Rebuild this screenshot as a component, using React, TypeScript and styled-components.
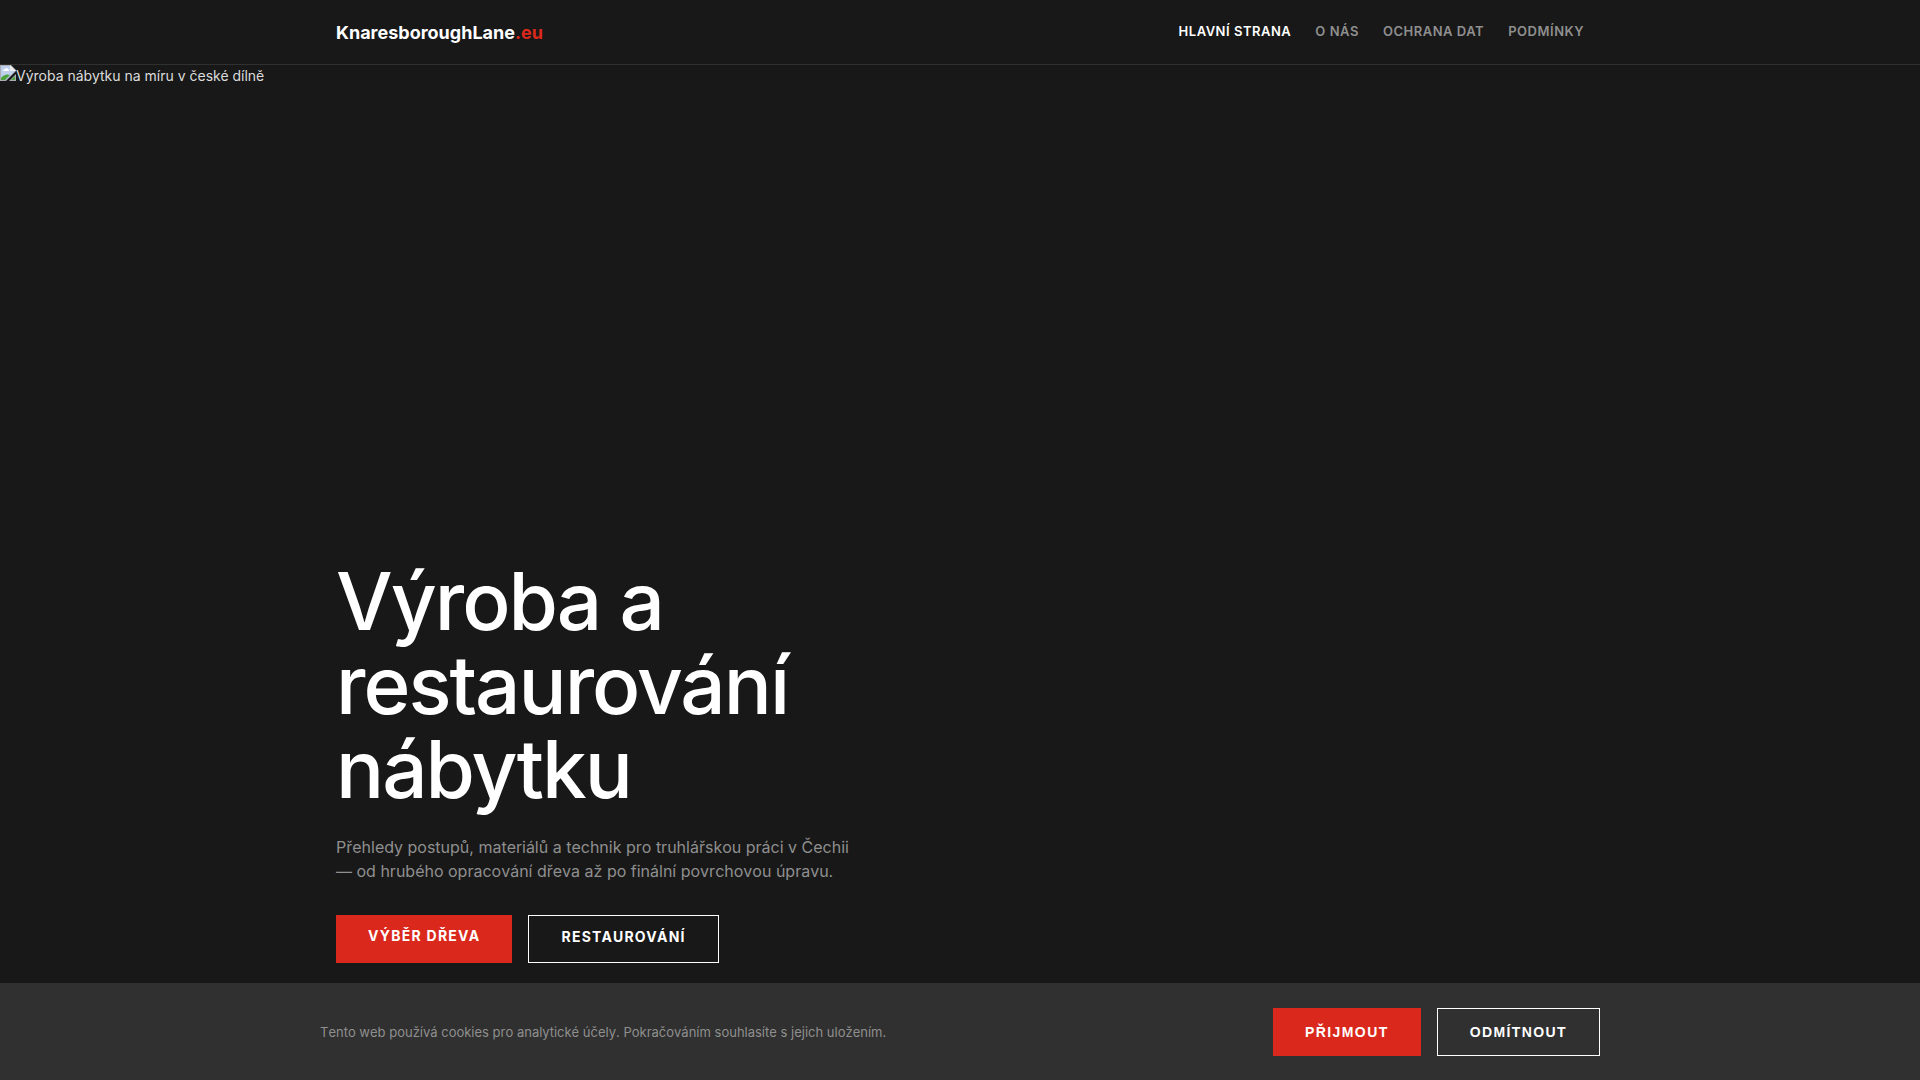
import React from "react";
import styled, { createGlobalStyle, css } from "styled-components";

const GlobalStyle = createGlobalStyle`
  *, *::before, *::after { box-sizing: border-box; }
  body {
    margin: 0;
    background: #181818;
    color: #ffffff;
    font-family: Inter, "Liberation Sans", sans-serif;
    font-size: 14px;
    line-height: 21px;
  }
  h1, p, ul { margin: 0; padding: 0; }
`;

const Page = styled.div`
  min-height: 100vh;
  display: flex;
  flex-direction: column;
`;

const Header = styled.header`
  border-bottom: 1px solid #303030;
`;

const HeaderInner = styled.div`
  max-width: 1280px;
  min-height: 64px;
  margin: 0 auto;
  padding: 0 16px;
  display: flex;
  align-items: center;
  justify-content: space-between;
`;

const Logo = styled.a`
  color: #ffffff;
  font-size: 18px;
  font-weight: 700;
  line-height: 27px;
  text-decoration: none;
`;

const LogoSuffix = styled.span`
  color: #da291c;
`;

const NavList = styled.ul`
  display: flex;
  gap: 24px;
  list-style: none;
`;

const NavLink = styled.a<{ $active?: boolean }>`
  display: block;
  border-bottom: 2px solid transparent;
  color: ${({ $active }) => ($active ? "#ffffff" : "#8f8f8f")};
  font-size: 13px;
  font-weight: 600;
  line-height: 20px;
  letter-spacing: 0.04em;
  text-transform: uppercase;
  text-decoration: none;
`;

const Hero = styled.main`
  flex: 1;
  display: flex;
  flex-direction: column;
  justify-content: space-between;
  padding-bottom: 20px;
`;

const MissingPhoto = styled.div`
  display: flex;
  color: #dcdcdc;
  svg { flex: none; }
`;

const HeroContent = styled.div`
  width: 100%;
  max-width: 1280px;
  margin: 0 auto;
  padding: 0 16px;
`;

const Title = styled.h1`
  max-width: 640px;
  margin-bottom: 24px;
  font-size: 80px;
  font-weight: 500;
  line-height: 84px;
  letter-spacing: -2px;
`;

const Lead = styled.p`
  max-width: 520px;
  margin-bottom: 32px;
  color: #8f8f8f;
  font-size: 16px;
  line-height: 24px;
  font-kerning: none;
`;

const Actions = styled.div`
  display: flex;
  gap: 16px;
`;

const buttonLook = css<{ $outline?: boolean }>`
  min-height: 48px;
  padding: 12px 32px;
  border: ${({ $outline }) => ($outline ? "1px solid #ffffff" : "0")};
  border-radius: 0;
  background: ${({ $outline }) => ($outline ? "transparent" : "#da291c")};
  color: #ffffff;
  font-size: 14px;
  font-weight: 700;
  text-transform: uppercase;
  text-decoration: none;
  cursor: pointer;
`;

const ActionLink = styled.a<{ $outline?: boolean }>`
  ${buttonLook}
  line-height: 18px;
  letter-spacing: 0.09em;
`;

const ActionButton = styled.button<{ $outline?: boolean }>`
  ${buttonLook}
  font-family: "Liberation Sans", Arial, sans-serif;
  letter-spacing: 0.1em;
`;

const CookieBar = styled.section`
  position: sticky;
  bottom: 0;
  border-top: 1px solid #303030;
  background: #303030;
`;

const CookieInner = styled.div`
  max-width: 1280px;
  margin: 0 auto;
  padding: 24px 0;
  display: flex;
  align-items: center;
  justify-content: space-between;
  gap: 24px;
`;

const CookieText = styled.p`
  color: #8f8f8f;
  font-size: 13px;
  line-height: 20px;
  font-kerning: none;
`;

const BrokenImageIcon = () => (
  <svg width="16" height="16" viewBox="0 0 16 16" aria-hidden="true">
    <path d="M0 0h11l5 5v1L6 16H0z" fill="#a9adb3" />
    <path d="M1 1h9v5h5L6 15H1z" fill="#bfd0ee" />
    <path d="M10 0l6 6h-6z" fill="#eeeeee" />
    <path d="M3 6q0-2 2-2 2-2 3 0 1 0 1 2z" fill="#ffffff" />
    <path d="M1 15v-2q4-5 9-3l-5 5z" fill="#4fa33d" />
    <path d="M16 9v7H9z" fill="#a9adb3" />
    <path d="M15 11v4h-4z" fill="#4fa33d" />
  </svg>
);

const links = ["Hlavní strana", "O nás", "Ochrana dat", "Podmínky"];

export default function App() {
  return (
    <Page>
      <GlobalStyle />
      <Header>
        <HeaderInner>
          <Logo href="#">
            KnaresboroughLane<LogoSuffix>.eu</LogoSuffix>
          </Logo>
          <nav>
            <NavList>
              {links.map((label, i) => (
                <li key={label}>
                  <NavLink href="#" $active={i === 0}>{label}</NavLink>
                </li>
              ))}
            </NavList>
          </nav>
        </HeaderInner>
      </Header>
      <Hero>
        <MissingPhoto>
          <BrokenImageIcon />
          <span>Výroba nábytku na míru v české dílně</span>
        </MissingPhoto>
        <HeroContent>
          <Title>Výroba a restaurování nábytku</Title>
          <Lead>
            Přehledy postupů, materiálů a technik pro truhlářskou práci v Čechii — od hrubého
            opracování dřeva až po finální povrchovou úpravu.
          </Lead>
          <Actions>
            <ActionLink href="#">Výběr dřeva</ActionLink>
            <ActionLink href="#" $outline>Restaurování</ActionLink>
          </Actions>
        </HeroContent>
      </Hero>
      <CookieBar>
        <CookieInner>
          <CookieText>
            Tento web používá cookies pro analytické účely. Pokračováním souhlasíte s jejich uložením.
          </CookieText>
          <Actions>
            <ActionButton type="button">Přijmout</ActionButton>
            <ActionButton type="button" $outline>Odmítnout</ActionButton>
          </Actions>
        </CookieInner>
      </CookieBar>
    </Page>
  );
}
